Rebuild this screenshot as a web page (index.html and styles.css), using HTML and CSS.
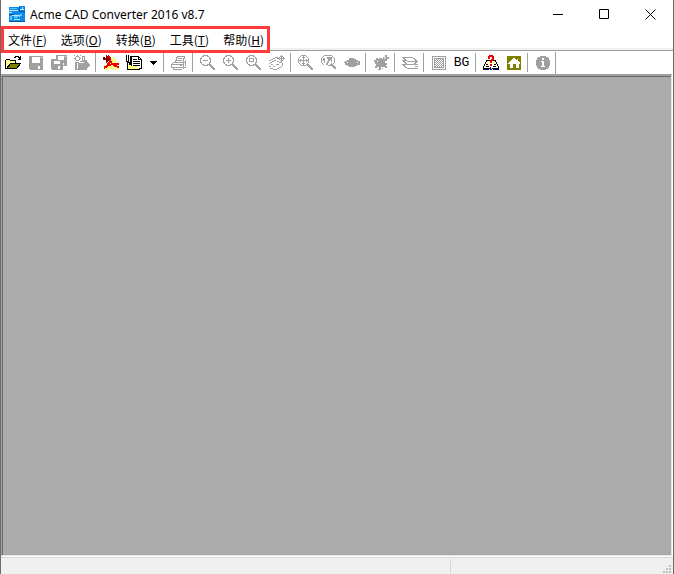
FILE: index.html
```html
<!DOCTYPE html>
<html lang="zh-CN">
<head>
    <meta charset="UTF-8">
    <meta name="viewport" content="width=device-width, initial-scale=1.0">
    <title>Acme CAD Converter 2016 v8.7</title>
    <link rel="stylesheet" href="styles.css">
</head>
<body>
    <header class="titlebar">
        <svg class="logo" width="16" height="16" viewBox="0 0 16 16" shape-rendering="crispEdges">
            <path fill="#0c8ae8" d="M0 1h10v-1h6v16H0z"/>
            <path fill="#075cae" d="M10 0h1v5h-1zM0 8h5v1H0zM10 5h6v1h-6zM0 15h16v1H0z"/>
            <path fill="none" stroke="#bfe8ff" d="M0 4.5h9M11 3.5h4M13.5 1v2M3 9.5h7M10.5 9v2M0 6.5h3M5 13.5h6"/>
            <path fill="#50c7ff" d="M5 10h4v2H5zM1 2h7v1H1zM11 8h2v2h-2zM1 10h2v4H1z"/>
        </svg>
        <h1>Acme CAD Converter 2016 v8.7</h1>
        <div class="window-buttons">
            <button type="button" aria-label="Minimize"><svg width="11" height="11" viewBox="0 0 11 11"><path d="M0 5.5h10"/></svg></button>
            <button type="button" aria-label="Maximize"><svg width="11" height="11" viewBox="0 0 11 11"><path d="M.5.5h9v9h-9z"/></svg></button>
            <button type="button" aria-label="Close"><svg width="11" height="11" viewBox="0 0 11 11"><path d="M.5.5l10 10M10.5.5l-10 10"/></svg></button>
        </div>
    </header>

    <nav class="menubar">
        <div class="menu-group">
            <button type="button">文件(<u>F</u>)</button>
            <button type="button">选项(<u>O</u>)</button>
            <button type="button">转换(<u>B</u>)</button>
            <button type="button">工具(<u>T</u>)</button>
            <button type="button">帮助(<u>H</u>)</button>
        </div>
    </nav>

    <div class="toolbar" role="toolbar">
        <button type="button" aria-label="Open">
            <svg viewBox="0 0 16 16">
                <path fill="#ff8" d="M1 5h3v-1h1v1h5v3H5l-4 5z"/>
                <path fill="#808000" d="M5 9h10l-4 5H1z"/>
                <path fill="none" stroke="#000" d="M.5 14V5.5L1.5 4.5h3l1 1h4.5v3M.5 13.5h11l4-5H5.5l-4 5M9 2.5h1v-1h3v1h1v1h1M15.5 1v4M13 4.5h2"/>
            </svg>
        </button>
        <button type="button" aria-label="Save" disabled>
            <svg viewBox="0 0 16 16">
                <path fill="#a0a0a0" fill-rule="evenodd" d="M1 1h14v14H2l-1-1zM4 2v6h8V2zM10 11v3h2v-3zM13 2v1h1V2z"/>
            </svg>
        </button>
        <button type="button" aria-label="Save all" disabled>
            <svg viewBox="0 0 16 16">
                <path fill="#a0a0a0" fill-rule="evenodd" d="M5 0h11v11h-4v4H1L0 14V4h5zM7 1v4h6V1zM14 1v1h1V1zM3 6v3h6V6zM7 11v3h2v-3zM12 8v2h1V8z"/>
            </svg>
        </button>
        <button type="button" aria-label="Export" disabled>
            <svg viewBox="0 0 16 16">
                <path fill="#a0a0a0" d="M0 0h1v1H0zM3 0h1v1H3zM6 0h1v1H6zM0 3h1v1H0zM6 3h1v1H6zM2 1h3v1H2zM2 5h3v1H2zM1 2h1v3H1zM5 2h1v3H5zM8 1h3v4h2v2h1v1h1v1h1v2h-1v1h-1v1h-1v2H1V7h5V6h2z"/>
                <path fill="#fff" d="M3 8h1v6H3zM5 7h4v1H5zM9 2h1v3H9zM9 7h1v1H9z"/>
            </svg>
        </button>
        <span class="separator"></span>
        <button type="button" aria-label="PDF">
            <svg viewBox="0 0 16 16">
                <path fill="#ff8" d="M4 2h7v2h2v3h2v3h1v5h-4v-1H6v1H1v-5h3z"/>
                <path fill="none" stroke="#f00000" stroke-width="2" d="M5 1c3 1 3 4 1 7L2 13M7 3c0 4 3 8 9 9M1 13c4-3 9-5 15-4"/>
                <path fill="#800000" d="M0 2h2v1h1V0h1v1h1v1h1v1h1v2H6v1H5v1H4v1H3V5H0z"/>
            </svg>
        </button>
        <button type="button" aria-label="Batch convert">
            <svg viewBox="0 0 16 16">
                <path fill="#fff" stroke="#000" d="M5.5 1.5h7l3 3v9h-10z"/>
                <path fill="#ff8" d="M1 9h3v2h7v2h2v2H1z"/>
                <path fill="none" stroke="#000" d="M.5 0v6l1 1v2M2.5 0v7l1 1v2M4.5 1v9M12.5 1v3.5h3M7 4.5h4M7 6.5h7M7 8.5h7M7 10.5h7M1.5 9v5.5h12v-1h2"/>
            </svg>
        </button>
        <button type="button" class="drop" aria-label="More">
            <svg viewBox="0 0 7 4"><path d="M0 0h7v1H6v1H5v1H4v1H3V3H2V2H1V1H0z"/></svg>
        </button>
        <span class="separator"></span>
        <button type="button" aria-label="Print" disabled>
            <svg viewBox="0 0 16 16">
                <path class="line" d="M4.5 7V5.5h1v-3h1v-1h7v2h-1v3M7 3.5h4M6 5.5h5M2 7.5h12M14.5 5v6M1.5 8v1M.5 9v4M0 9.5h12M12.5 9v5M1 12.5h11M13 12.5h2M2.5 13v2M2 14.5h9M12 8.5h1M9 10.5h2"/>
            </svg>
        </button>
        <span class="separator"></span>
        <button type="button" aria-label="Zoom out" disabled>
            <svg viewBox="0 0 16 16">
                <path class="line" d="M3 .5h5M2 1.5h2M7 1.5h2M.5 3v5M1.5 2v2M9.5 2v2M10.5 3v5M1.5 7v2M9.5 7v2M2 9.5h2M7 9.5h2M3 10.5h5M3 5.5h5"/>
                <path class="thick" d="M9 9l6 6"/>
            </svg>
        </button>
        <button type="button" aria-label="Zoom in" disabled>
            <svg viewBox="0 0 16 16">
                <path class="line" d="M3 .5h5M2 1.5h2M7 1.5h2M.5 3v5M1.5 2v2M9.5 2v2M10.5 3v5M1.5 7v2M9.5 7v2M2 9.5h2M7 9.5h2M3 10.5h5M3 5.5h5M5.5 3v5"/>
                <path class="thick" d="M9 9l6 6"/>
            </svg>
        </button>
        <button type="button" aria-label="Zoom window" disabled>
            <svg viewBox="0 0 16 16">
                <path class="line" d="M3 .5h5M2 1.5h2M7 1.5h2M.5 3v5M1.5 2v2M9.5 2v2M10.5 3v5M1.5 7v2M9.5 7v2M2 9.5h2M7 9.5h2M3 10.5h5M3.5 3.5h4v3h-4z"/>
                <path class="thick" d="M9 9l6 6"/>
            </svg>
        </button>
        <button type="button" aria-label="Pan" disabled>
            <svg viewBox="0 0 16 16">
                <path class="line" d="M0 5.5h2M2 4.5h2M4 3.5h2M6 2.5h3M8 3.5h2M3 6.5h2M5 5.5h2M1 7.5h2M0 8.5h1M2 9.5h2M0 11.5h2M1 13.5h3M4 14.5h4M8 13.5h2M10 12.5h2M12 11.5h1M13.5 8v3M10 7.5h3M8 6.5h2M4 11.5h2M7 9.5h3"/>
                <path class="line" d="M9 3.5h7M12.5 0v7M11 1.5h3M11 5.5h3M10.5 2v3M14.5 2v3"/>
            </svg>
        </button>
        <span class="separator"></span>
        <button type="button" aria-label="Zoom extents" disabled>
            <svg viewBox="0 0 16 16">
                <path class="line" d="M3 .5h5M2 1.5h1M8 1.5h1M.5 3v5M1.5 2v1M9.5 2v1M10.5 3v5M1.5 8v1M9.5 8v1M2 9.5h1M8 9.5h1M3 10.5h5M1 5.5h9M5.5 1v9M4 2.5h3M4 8.5h3M2.5 4v3M8.5 4v3"/>
                <path class="thick" d="M9 9l6 6"/>
            </svg>
        </button>
        <button type="button" aria-label="Zoom previous" disabled>
            <svg viewBox="0 0 16 16">
                <path class="line" d="M3.5 10.5l-3-3v-4l3-3h7l3 3v4l-3 3h-4"/>
                <path fill="#a0a0a0" d="M6 2h5v5h-1V5H9v1H8v2H7v2H5V8h1V6h1V4H6zM2 3h2v5H3V6H2z"/>
                <path class="thick" d="M10 9l5 5"/>
            </svg>
        </button>
        <button type="button" aria-label="View" disabled>
            <svg viewBox="0 0 16 16">
                <path fill="#a0a0a0" fill-rule="evenodd" d="M5 3h5v1h2v1h2v1h2v4h-3v1h-2v1H5v-1H3v-1H1V8H0V7h1V6h2V5h2zM13 7v1h1V7zM3 7v1h1V7z"/>
            </svg>
        </button>
        <span class="separator"></span>
        <button type="button" aria-label="Redraw" disabled>
            <svg viewBox="0 0 16 16">
                <path fill="#a0a0a0" d="M3 3h2v1h1V3h3v1h1V2h2V0h2v2h2v2h-2v2h-2v2h2v2h-1v1h1v2h-2v-1h-2v2H9v-2H8v3H5v-1h1v-2H4v1H2v-2h1v-2H1V9h1V7H1V5h2z"/>
                <path stroke="#fff" d="M11 3.5h1M12 2.5h1M4 6.5h1M9 12.5h1"/>
            </svg>
        </button>
        <span class="separator"></span>
        <button type="button" aria-label="Layers" disabled>
            <svg viewBox="0 0 16 16">
                <path class="line" d="M.5 2.5h10l5 4H5.5zM.5 5.5l5 4h10M.5 9.5l5 4h10M.5 5.5h3M.5 9.5h4M14.5 7l-2 2M15.5 11l-2 1"/>
            </svg>
        </button>
        <span class="separator"></span>
        <button type="button" aria-label="Grid" disabled>
            <svg viewBox="0 0 16 16">
                <path class="line" d="M1.5 1.5h13v13h-13z"/>
                <path fill="#a0a0a0" d="M3 3h10v10H3z"/>
                <path stroke="#fff" stroke-dasharray="1 1" d="M4 4.5h8"/>
                <path stroke="#fff" stroke-dasharray="1 1" d="M5 5.5h7"/>
                <path stroke="#fff" stroke-dasharray="1 1" d="M4 6.5h8"/>
                <path stroke="#fff" stroke-dasharray="1 1" d="M5 7.5h7"/>
                <path stroke="#fff" stroke-dasharray="1 1" d="M4 8.5h8"/>
                <path stroke="#fff" stroke-dasharray="1 1" d="M5 9.5h7"/>
                <path stroke="#fff" stroke-dasharray="1 1" d="M4 10.5h8"/>
                <path stroke="#fff" stroke-dasharray="1 1" d="M5 11.5h7"/>
            </svg>
        </button>
        <button type="button" class="bg">BG</button>
        <span class="separator"></span>
        <button type="button" aria-label="Help topics">
            <svg viewBox="0 0 16 16">
                <path fill="#fff" stroke="#000" d="M3.5 5.5L.5 12.5v1h6l1 1h1l1-1h6v-1l-3-7z"/>
                <path fill="#ffff80" d="M4 6h2v3H4zM10 6h2v3h-2zM2 11h2v1H2zM12 11h2v1h-2z"/>
                <path fill="none" stroke="#000080" d="M7.5 12v3M0 14.5h6M10 14.5h6"/>
                <path fill="none" stroke="#000" d="M3 9.5h2M11 9.5h2M3 11.5h3M10 11.5h3"/>
                <path fill="#f00000" d="M5 1h1V0h4v1h1v4h-1v1H9v2H7V5h1V4h1V2H7v2H5zM7 9h2v2H7z"/>
            </svg>
        </button>
        <button type="button" aria-label="Home page">
            <svg viewBox="0 0 16 16">
                <path fill="#808000" d="M1 1h14v14H1z"/>
                <path fill="#fff" d="M7 3h2v1h1v1h1V4h1v2h1v1h1v2h-1v4h-3V9H7v4H4V9H2V8h1V7h1V6h1V5h1V4h1z"/>
            </svg>
        </button>
        <span class="separator"></span>
        <button type="button" aria-label="About" disabled>
            <svg viewBox="0 0 16 16">
                <path fill="#a0a0a0" d="M5 1h6v1h2v1h1v2h1v6h-1v2h-1v1h-2v1H5v-1H3v-1H2v-2H1V5h1V3h1V2h2z"/>
                <path fill="#fff" d="M7 3h2v2H7zM6 6h3v5h1v1H6v-1h1V7H6z"/>
            </svg>
        </button>
        <span class="end"></span>
    </div>

    <main class="workspace"></main>

    <footer class="statusbar">
        <div class="message"></div>
        <div class="info">
            <svg class="grip" width="9" height="9" viewBox="0 0 9 9">
                <path d="M6 0h2v2H6zM3 3h2v2H3zM6 3h2v2H6zM0 6h2v2H0zM3 6h2v2H3zM6 6h2v2H6z"/>
            </svg>
        </div>
    </footer>
</body>
</html>
```
FILE: styles.css
```css
* {
    box-sizing: border-box;
}
body {
    display: flex;
    flex-direction: column;
    height: 100vh;
    margin: 0;
    border: solid #6b6b6b;
    border-width: 0 1px;
    background-color: #fff;
    color: #000;
    font-family: "Noto Sans", "Noto Sans CJK SC", sans-serif;
    font-size: 12px;
    overflow: hidden;
}
button {
    padding: 0;
    border: none;
    background: none;
    color: inherit;
    font: inherit;
}
.titlebar {
    display: flex;
    align-items: center;
    height: 28px;
    padding-left: 8px;
}
.titlebar h1 {
    flex: 1;
    margin: 0 0 0 5px;
    font-size: 12px;
    font-weight: normal;
}
.window-buttons {
    display: flex;
}
.window-buttons button {
    display: flex;
    align-items: center;
    justify-content: center;
    width: 46px;
    height: 28px;
}
.window-buttons path {
    fill: none;
    stroke: #000;
}
.menubar {
    position: relative;
    height: 23px;
    border-bottom: 1px solid #a0a0a0;
    box-shadow: inset 0 -2px #f0f0f0;
}
/* red frame round the menus, lies over the toolbar edge */
.menu-group {
    position: absolute;
    top: -2px;
    left: 0;
    display: flex;
    height: 27px;
    border: 3px solid #ff3b3b;
    background-color: #fff;
}
.menu-group button {
    padding: 0 7px;
    font-family: "Noto Sans CJK SC", sans-serif;
    line-height: 18px;
}
.menu-group button:first-child {
    padding-left: 4px;
}
.menu-group button:last-child {
    padding-right: 3px;
}
.toolbar {
    display: flex;
    height: 23px;
}
.toolbar button {
    display: flex;
    align-items: center;
    justify-content: center;
    width: 23px;
    height: 23px;
}
.toolbar svg {
    width: 16px;
    height: 16px;
    shape-rendering: crispEdges;
}
.toolbar .drop {
    width: 16px;
}
.toolbar .drop svg {
    width: 7px;
    height: 4px;
}
.toolbar .bg {
    font-family: "Liberation Mono", monospace;
    font-size: 13px;
}
.line {
    fill: none;
    stroke: #a0a0a0;
}
.thick {
    fill: none;
    stroke: #a0a0a0;
    stroke-width: 2;
}
.separator {
    width: 1px;
    margin: 2px 3px 2px 2px;
    background-color: #a0a0a0;
}
.end {
    width: 1px;
    margin: 1px 0 0 1px;
    background-color: #a0a0a0;
}
.workspace {
    flex: 1;
    margin-right: 1px;
    border: solid;
    border-color: #a0a0a0 #e3e3e3 #e3e3e3 #a0a0a0;
    border-width: 2px 1px 1px 1px;
    background-color: #ababab;
    box-shadow: inset 1px 1px #696969;
}
.statusbar {
    display: flex;
    height: 17px;
    margin-top: 1px;
    border-top: 1px solid #d7d7d7;
    background-color: #f0f0f0;
}
.message {
    flex: 1;
    margin-top: 1px;
    border-right: 1px solid #d7d7d7;
}
.info {
    display: flex;
    align-items: flex-end;
    justify-content: flex-end;
    width: 222px;
    padding-right: 1px;
}
.grip {
    fill: #bfbfbf;
}
```
